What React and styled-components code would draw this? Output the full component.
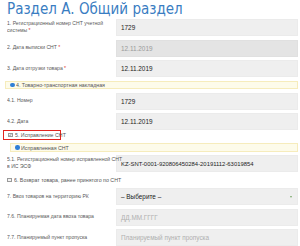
import React from "react";
import styled, { createGlobalStyle } from "styled-components";

const GlobalStyle = createGlobalStyle`
  html, body { margin: 0; padding: 0; background: #ffffff; }
  body { font-family: "Liberation Sans", Arial, sans-serif; overflow: hidden; }
`;

const Page = styled.div`
  width: 300px;
  height: 246px;
  box-sizing: border-box;
  padding: 0 2px 0 5px;
  display: flex;
  flex-direction: column;
  gap: 3.5px;
  overflow: hidden;
`;

const Title = styled.h1`
  margin: 0 0 -3.5px 2px;
  height: 23px;
  font-family: "Liberation Sans Narrow", "DejaVu Sans Condensed", "Liberation Sans", sans-serif;
  font-stretch: condensed;
  font-weight: 400;
  font-size: 15px;
  line-height: 19px;
  color: #3a7dc2;
  white-space: nowrap;
`;

const Row = styled.div`
  display: grid;
  grid-template-columns: 111px 1fr;
  align-items: center;
  min-height: 17px;
`;

const Label = styled.div`
  padding-left: 2px;
  display: flex;
  align-items: center;
`;

/* The reference uses ~5px text, below the browser's 6px minimum, so it is scaled */
const LabelText = styled.div`
  flex: none;
  display: flex;
  flex-direction: column;
  font-size: 6px;
  line-height: 7.6px;
  color: #595959;
  transform: scale(0.85);
  transform-origin: left center;
`;

const Line = styled.span`
  display: flex;
  white-space: pre;
`;

const Small = styled.span`
  display: inline-block;
  white-space: nowrap;
  transform: scale(${(p) => p.$k || 0.88});
  transform-origin: left center;
`;

const Req = styled.span`
  color: #e0302a;
  margin-left: 1.6px;
`;

const Field = styled.div`
  height: 17px;
  box-sizing: border-box;
  display: flex;
  align-items: center;
  justify-content: space-between;
  padding: 0 5px 0 4px;
  background: ${(p) => (p.$disabled ? "#e4e4e4" : "#efefef")};
  border: 1px solid ${(p) => (p.$disabled ? "#e0e0e0" : "#ebebeb")};
  font-size: 6.4px;
  color: ${(p) => (p.$placeholder ? "#b0b0b0" : p.$disabled ? "#9a9a9a" : "#222222")};
  white-space: nowrap;
  overflow: hidden;
`;

const Section = styled.div`
  height: 10.5px;
  box-sizing: border-box;
  margin-left: ${(p) => (p.$indent ? "5px" : "0")};
  display: flex;
  align-items: center;
  gap: 1px;
  padding-left: 4px;
  background: #fdfbea;
  border: 1px solid #f6ecbc;
  font-size: 6px;
  color: #555555;
  white-space: nowrap;
`;

const Dot = styled.span`
  width: 4.5px;
  height: 4.5px;
  border-radius: 50%;
  background: #2f7fd6;
  flex: none;
`;

const CheckLine = styled.div`
  display: flex;
  align-items: center;
  gap: 2px;
  height: ${(p) => (p.$boxed ? "12px" : "11px")};
  box-sizing: border-box;
  width: ${(p) => (p.$boxed ? "58px" : "auto")};
  margin-left: ${(p) => (p.$boxed ? "-2px" : "0")};
  margin-top: ${(p) => (p.$boxed ? "-3.5px" : "0")};
  padding-left: ${(p) => (p.$boxed ? "4px" : "2px")};
  border: ${(p) => (p.$boxed ? "1.5px solid #e2231e" : "none")};
  font-size: 6px;
  color: #555555;
  white-space: nowrap;
`;

const Box = styled.span`
  width: 4.5px;
  height: 4.5px;
  box-sizing: border-box;
  border: 0.6px solid #9a9a9a;
  background: #f4f4f4;
  flex: none;
  display: flex;
  align-items: center;
  justify-content: center;
`;

const Caret = styled.span`
  width: 0;
  height: 0;
  border-left: 1.5px solid transparent;
  border-right: 1.5px solid transparent;
  border-top: 2px solid #7aa86a;
`;

const fields = [
  { label: ["1. Регистрационный номер СНТ учетной", "системы"], req: true, value: "1729" },
  { label: ["2. Дата выписки СНТ"], req: true, value: "12.11.2019", disabled: true },
  { label: ["3. Дата отгрузки товара"], req: true, value: "12.11.2019" },
];

function FieldRow({ label, req, value, disabled, placeholder, children }) {
  const lines = Array.isArray(label) ? label : [label];
  return (
    <Row>
      <Label>
        <LabelText>
          {lines.map((l, i) => (
            <Line key={i}>
              {l}
              {req && i === lines.length - 1 && <Req>*</Req>}
            </Line>
          ))}
        </LabelText>
      </Label>
      <Field $disabled={disabled} $placeholder={placeholder}>
        {value}
        {children}
      </Field>
    </Row>
  );
}

export default function App() {
  return (
    <>
      <GlobalStyle />
      <Page>
        <Title>Раздел А. Общий раздел</Title>
        {fields.map((f) => (
          <FieldRow key={f.label[0]} label={f.label} req={f.req} value={f.value} disabled={f.disabled} />
        ))}
        <Section>
          <Dot />
          <Small>4. Товарно-транспортная накладная</Small>
        </Section>
        <FieldRow label="4.1. Номер" value="1729" />
        <FieldRow label="4.2. Дата" value="12.11.2019" />
        <CheckLine $boxed>
          <Box>
            <svg width="4" height="4" viewBox="0 0 4 4">
              <path d="M0.6 2 L1.6 3 L3.4 0.8" fill="none" stroke="#333" strokeWidth="0.8" />
            </svg>
          </Box>
          <Small>5. Исправление СНТ</Small>
        </CheckLine>
        <Section $indent>
          <Dot />
          <Small>Исправленная СНТ</Small>
        </Section>
        <FieldRow
          label={["5.1. Регистрационный номер исправленной СНТ", "в ИС ЭСФ"]}
          value={<Small $k={0.92}>KZ-SNT-0001-920806450284-20191112-63019854</Small>}
        />
        <CheckLine>
          <Box />
          <Small>6. Возврат товара, ранее принятого по СНТ</Small>
        </CheckLine>
        <FieldRow label="7. Ввоз товаров на территорию РК" value="– Выберите –">
          <Caret />
        </FieldRow>
        <FieldRow label="7.6. Планируемая дата ввоза товара" value="ДД.ММ.ГГГГ" placeholder />
        <FieldRow label="7.7. Планируемый пункт пропуска" value="Планируемый пункт пропуска" placeholder />
      </Page>
    </>
  );
}
